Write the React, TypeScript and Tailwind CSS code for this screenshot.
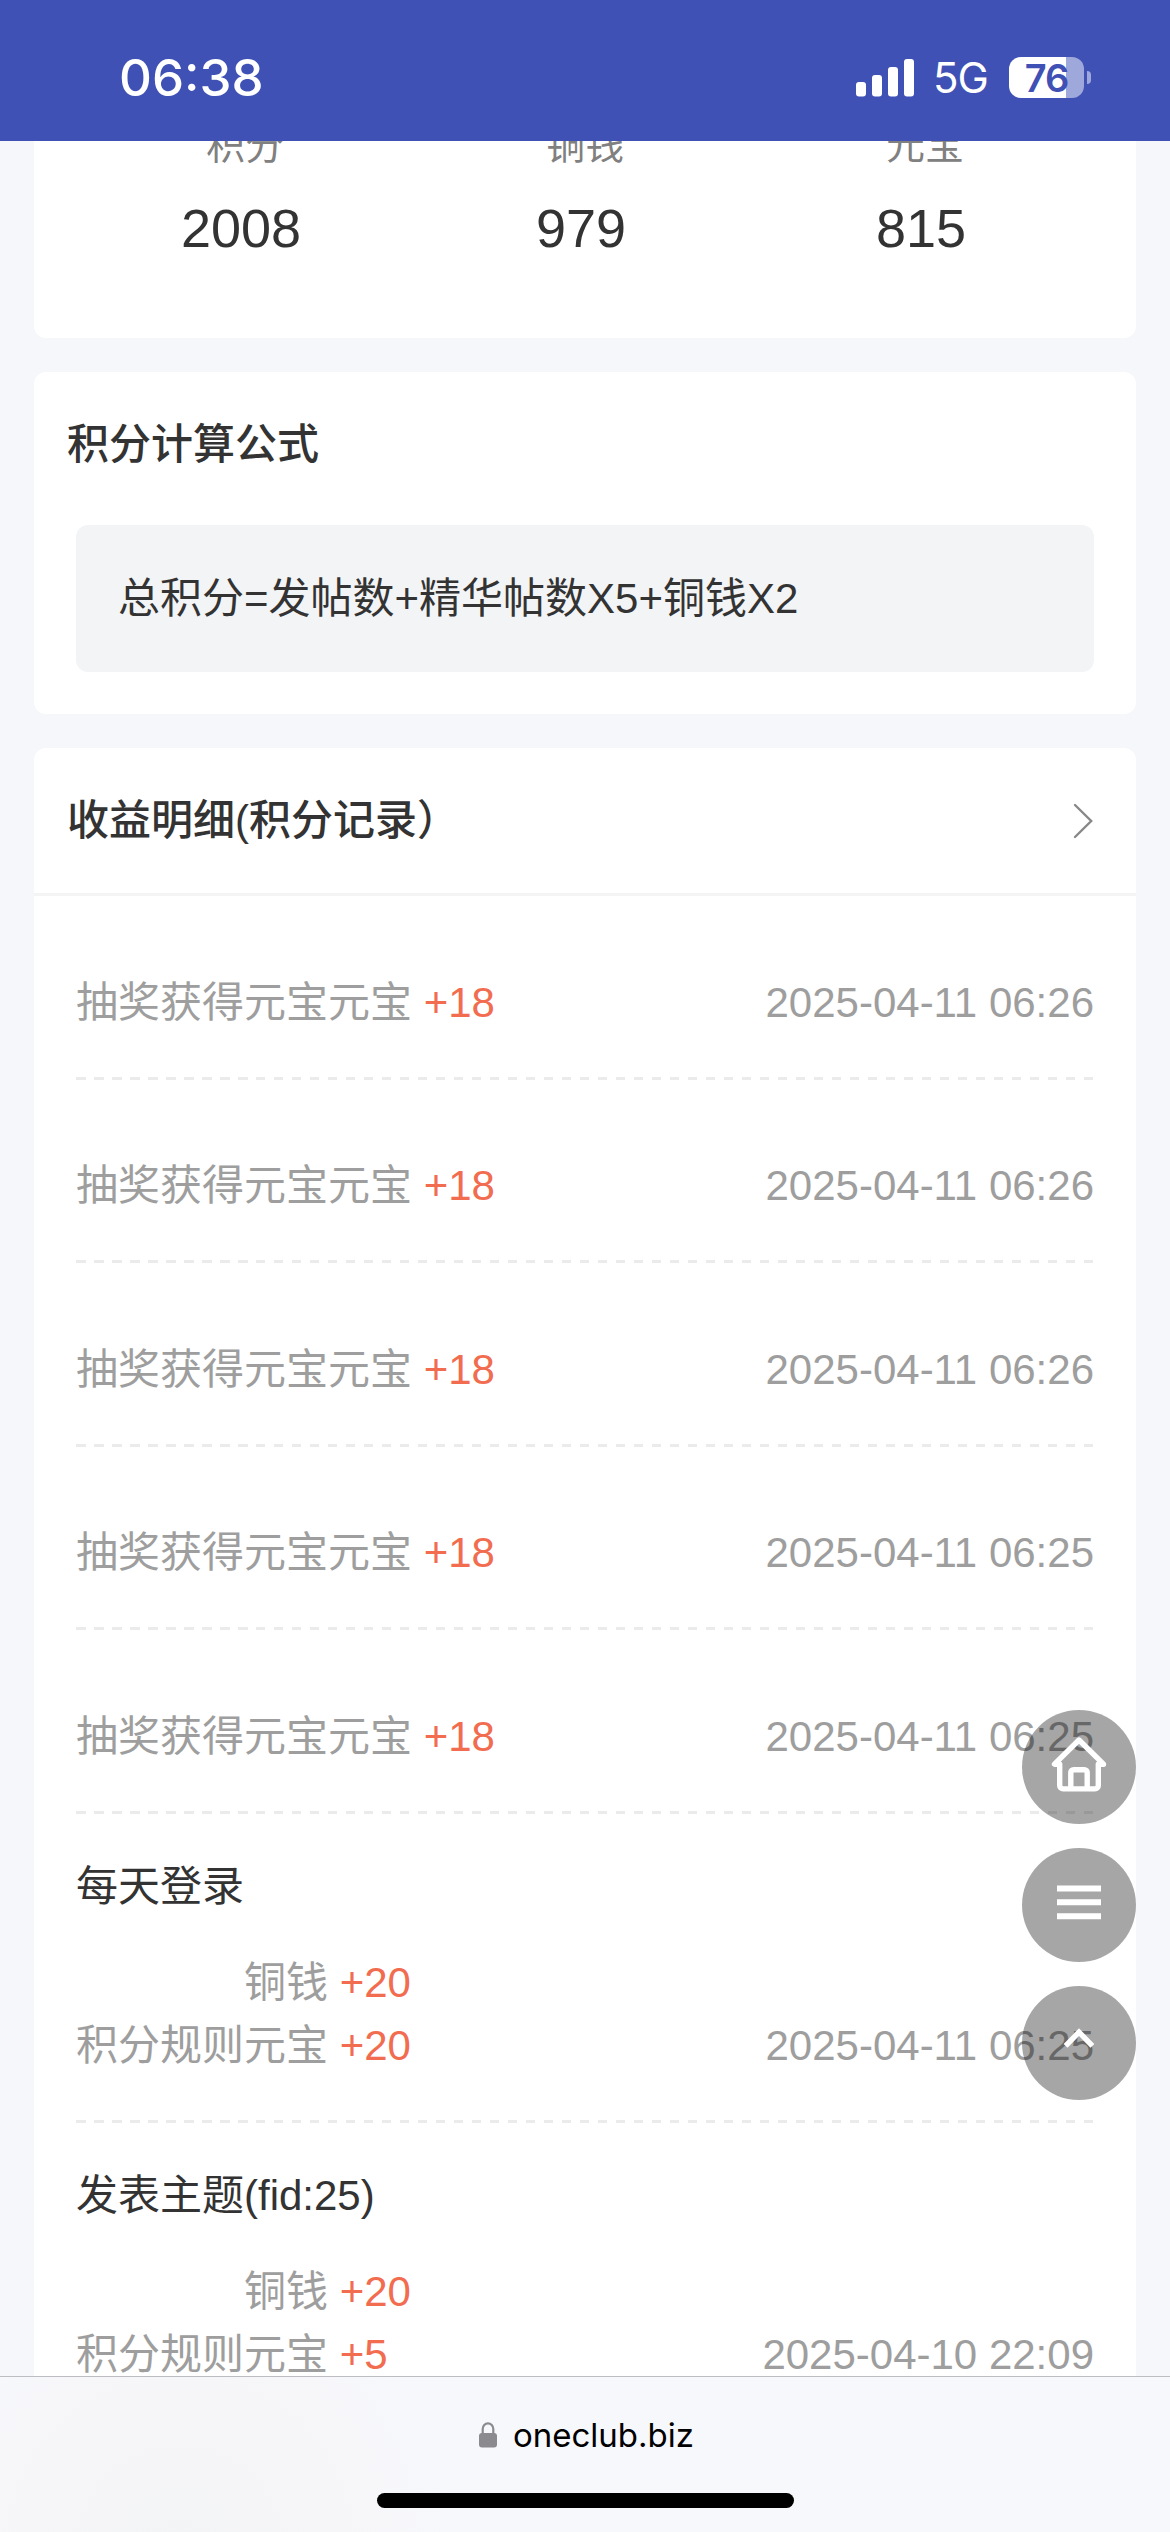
type Stat = { label: string; value: string };

type Entry = {
  title?: string;
  extra?: { name: string; amount: string };
  name: string;
  amount: string;
  time: string;
};

const stats: Stat[] = [
  { label: "积分", value: "2008" },
  { label: "铜钱", value: "979" },
  { label: "元宝", value: "815" },
];

const entries: Entry[] = [
  { name: "抽奖获得元宝元宝", amount: "+18", time: "2025-04-11 06:26" },
  { name: "抽奖获得元宝元宝", amount: "+18", time: "2025-04-11 06:26" },
  { name: "抽奖获得元宝元宝", amount: "+18", time: "2025-04-11 06:26" },
  { name: "抽奖获得元宝元宝", amount: "+18", time: "2025-04-11 06:25" },
  { name: "抽奖获得元宝元宝", amount: "+18", time: "2025-04-11 06:25" },
  {
    title: "每天登录",
    extra: { name: "铜钱", amount: "+20" },
    name: "积分规则元宝",
    amount: "+20",
    time: "2025-04-11 06:25",
  },
  {
    title: "发表主题(fid:25)",
    extra: { name: "铜钱", amount: "+20" },
    name: "积分规则元宝",
    amount: "+5",
    time: "2025-04-10 22:09",
  },
];

function StatusBar() {
  return (
    <header className="flex h-[141px] shrink-0 items-center justify-between bg-[#3f51b5] pt-[14px] pr-[79px] pl-[119px] font-['Inter',sans-serif] text-white">
      <span className="text-[51px] leading-none font-medium">06:38</span>
      <div className="flex items-center">
        <svg width="58" height="38" viewBox="0 0 58 38" fill="currentColor">
          <rect x="0" y="23" width="10" height="14.5" rx="3" />
          <rect x="16" y="16" width="10" height="21.5" rx="3" />
          <rect x="32" y="8" width="10" height="29.5" rx="3" />
          <rect x="48" y="0" width="10" height="37.5" rx="3" />
        </svg>
        <span className="ml-[19px] w-[56px] text-[42px] leading-[52px] tracking-[-1px]">5G</span>
        <div className="ml-[20px] flex h-[41px] w-[75px] items-center justify-center rounded-[12px] bg-[linear-gradient(to_right,#fff_57px,#9fa8da_57px)]">
          <span className="text-[38px] leading-none font-semibold tracking-[-1px] text-[#3f51b5]">76</span>
        </div>
        <div className="ml-[3px] h-[13px] w-1 rounded-r-full bg-[#9fa8da]" />
      </div>
    </header>
  );
}

function EntryRow({ entry }: { entry: Entry }) {
  return (
    <li>
      {entry.title ? (
        <p className="mb-[33px] pt-[41.3px] text-[#333]">{entry.title}</p>
      ) : (
        <div className="h-[74.5px]" />
      )}
      {entry.extra && (
        <p className="pl-[168px]">
          {entry.extra.name} <span className="text-[#f26c4f]">{entry.extra.amount}</span>
        </p>
      )}
      <div className="flex justify-between">
        <p>
          {entry.name} <span className="text-[#f26c4f]">{entry.amount}</span>
        </p>
        <time>{entry.time}</time>
      </div>
      <div className="mt-[43px] h-[3px] bg-[repeating-linear-gradient(to_right,#ebebeb_0_9.5px,transparent_9.5px_18px)]" />
    </li>
  );
}

function FloatingButtons() {
  const round = "size-[114px] rounded-full bg-black/35";
  return (
    <div className="absolute top-[1710px] right-[34px] flex flex-col gap-6">
      <button className={round} aria-label="首页">
        <svg viewBox="0 0 114 114" fill="none" stroke="#fff" strokeWidth="5.4" strokeLinejoin="round">
          <path d="M57 30 L32.5 54.2 H37.7 V75.5 a3.4 3.4 0 0 0 3.4 3.4 H72.9 a3.4 3.4 0 0 0 3.4 -3.4 V54.2 H81.5 Z" />
          <path d="M48.8 79 V62.5 a2.8 2.8 0 0 1 2.8 -2.8 H62.4 a2.8 2.8 0 0 1 2.8 2.8 V79" />
        </svg>
      </button>
      <button className={round} aria-label="菜单">
        <svg viewBox="0 0 114 114" stroke="#fff" strokeWidth="6">
          <path d="M35 40.4 H79 M35 54.3 H79 M35 68.2 H79" />
        </svg>
      </button>
      <button className={round} aria-label="返回顶部">
        <svg viewBox="0 0 114 114" fill="none" stroke="#fff" strokeWidth="5.4">
          <path d="M43.6 59.8 L57 46.2 L70.4 59.8" />
        </svg>
      </button>
    </div>
  );
}

function BrowserBar() {
  return (
    <footer className="flex h-[156px] shrink-0 flex-col items-center border-t border-[#bcbdc2] bg-[#f7f8fc] bg-[radial-gradient(circle_at_180px_170px,#f3f4f6_0,#f6f6f8_150px,#f7f8fc_280px)]">
      <div className="mt-[38px] flex h-[40px] items-center pl-[3px]">
        <svg width="18" height="26" viewBox="0 0 18 26">
          <path d="M3.7 13 V7 a5.3 5.6 0 0 1 10.6 0 V13" fill="none" stroke="#8a8a8f" strokeWidth="2.2" />
          <rect x="0" y="11" width="18" height="14.5" rx="3" fill="#8a8a8f" />
        </svg>
        <span className="ml-4 font-['Inter',sans-serif] text-[33px] leading-none text-black">oneclub.biz</span>
      </div>
      <div className="mt-[38px] h-[15px] w-[417px] rounded-full bg-black" />
    </footer>
  );
}

export default function App() {
  return (
    <div className="relative flex h-[2532px] w-[1170px] flex-col overflow-hidden bg-[#f5f7fb] font-['Liberation_Sans','Noto_Sans_CJK_SC',sans-serif] text-[42px] leading-[63px] text-[#333]">
      <StatusBar />

      <main className="flex min-h-0 flex-1 flex-col gap-[34px] overflow-hidden px-[34px]">
        {/* balance card, scrolled partly under the status bar */}
        <section className="-mt-[25px] grid h-[222px] shrink-0 grid-cols-[340px_340px_340px] rounded-xl bg-white pl-[37px]">
          {stats.map((s) => (
            <div key={s.label} className="text-center">
              <p className="pl-2 text-[39px] leading-[59px] text-[#808080]">{s.label}</p>
              <p className="mt-[13px] text-[54px] leading-[80px]">{s.value}</p>
            </div>
          ))}
        </section>

        <section className="h-[342px] shrink-0 rounded-xl bg-white px-[42px] pt-[41px]">
          <h2 className="-ml-[9px] font-medium">积分计算公式</h2>
          <p className="mt-[49px] flex h-[147px] items-center rounded-xl bg-[#f3f4f6] px-[42px]">
            总积分=发帖数+精华帖数X5+铜钱X2
          </p>
        </section>

        <section className="shrink-0 rounded-xl bg-white">
          <div className="flex h-[148px] items-center justify-between border-b-[3px] border-[#f4f4f4] pr-[43px] pl-[33px]">
            <h2 className="font-medium">收益明细(积分记录）</h2>
            <svg width="20" height="36" viewBox="0 0 20 36" fill="none" stroke="#888" strokeWidth="2.4" strokeLinecap="round">
              <path d="M2 2 L18.2 18 L2 34" />
            </svg>
          </div>
          <ul className="px-[42px] text-[#9e9e9e]">
            {entries.map((entry, i) => (
              <EntryRow key={i} entry={entry} />
            ))}
          </ul>
        </section>
      </main>

      <BrowserBar />
      <FloatingButtons />
    </div>
  );
}
